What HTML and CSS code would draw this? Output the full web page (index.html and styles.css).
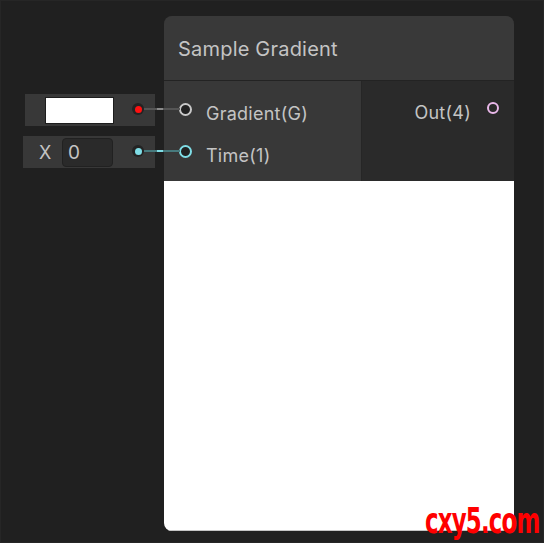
FILE: index.html
```html
<!DOCTYPE html>
<html lang="en">
<head>
    <meta charset="UTF-8">
    <title>Sample Gradient</title>
    <link rel="stylesheet" href="styles.css">
</head>
<body>
    <div class="graph">
        <!-- inline input widgets on the left of the node -->
        <div class="inline gradientInline">
            <span class="swatch"></span>
            <span class="dot red"></span>
        </div>
        <div class="inline timeInline">
            <span class="axis">X</span>
            <span class="numField">0</span>
            <span class="dot cyan"></span>
        </div>

        <svg class="edges" width="544" height="543">
            <line x1="144" y1="109" x2="180" y2="109" stroke="#555" stroke-width="2"/>
            <line x1="157" y1="109" x2="163" y2="109" stroke="#8a8a8a" stroke-width="2"/>
            <line x1="144" y1="151" x2="180" y2="151" stroke="#477a7d" stroke-width="2"/>
            <line x1="157" y1="151" x2="163" y2="151" stroke="#7fdde6" stroke-width="2"/>
        </svg>

        <div class="node">
            <div class="title">Sample Gradient</div>
            <div class="ports">
                <div class="inputs">
                    <div class="port">
                        <span class="ring"></span>
                        <span class="label">Gradient(G)</span>
                    </div>
                    <div class="port">
                        <span class="ring cyanRing"></span>
                        <span class="label">Time(1)</span>
                    </div>
                </div>
                <div class="outputs">
                    <div class="port out">
                        <span class="label">Out(4)</span>
                        <span class="ring pinkRing"></span>
                    </div>
                </div>
            </div>
            <div class="preview"></div>
        </div>

        <div class="mark">cxy5.com</div>
    </div>
</body>
</html>
```

FILE: styles.css
```css
*{
    margin: 0;
    padding: 0;
    box-sizing: border-box;
}
body{
    background: #202020;
    font-family: Inter, "Noto Sans", sans-serif;
    color: #c4c4c4;
}
.graph{
    position: relative;
    width: 544px;
    height: 543px;
    box-shadow: inset 0 0 0 1px #262626;
    overflow: hidden;
}
.node{
    position: absolute;
    left: 164px;
    top: 16px;
    width: 350px;
    height: 515px;
    border-radius: 8px;
    overflow: hidden;
    background: #2a2a2a;
    display: flex;
    flex-direction: column;
}
.node .title{
    height: 65px;
    padding: 1px 0 0 14px;
    background: #393939;
    border-bottom: 1px solid #232323;
    font-size: 20px;
    letter-spacing: 0.2px;
    line-height: 64px;
}
.node .ports{
    display: flex;
    height: 100px;
}
.node .inputs{
    width: 198px;
    background: #383838;
    padding-top: 7px;
    border-right: 1px solid #262626;
}
.node .outputs{
    flex: 1;
    background: #2a2a2a;
    padding-top: 6px;
}
.port{
    height: 42px;
    display: flex;
    align-items: center;
    font-size: 18px;
    letter-spacing: 0.25px;
}
.port .label{
    margin-top: 8px;
}
.port .ring{
    width: 13px;
    height: 13px;
    border-radius: 50%;
    border: 2px solid #c8c8c8;
    background: #222;
    margin-left: 15px;
    margin-right: 14px;
}
.port .cyanRing{
    border-color: #7fdde6;
}
.port.out{
    justify-content: flex-end;
    padding-right: 15px;
}
.port.out .ring{
    margin-left: 16px;
    margin-right: 0;
    width: 12px;
    height: 12px;
}
.port .pinkRing{
    border-color: #eab8ea;
    background: transparent;
}
.node .preview{
    flex: 1;
    background: #fff;
    border-bottom: 1px solid #c4c4c4;
}
.inline{
    position: absolute;
    height: 32px;
    background: #383838;
    display: flex;
    align-items: center;
}
.gradientInline{
    left: 25px;
    top: 94px;
    width: 130px;
    padding-left: 20px;
}
.timeInline{
    left: 23px;
    top: 136px;
    width: 132px;
    padding-left: 16px;
}
.swatch{
    width: 69px;
    height: 27px;
    background: #fff;
    border: 1px solid #1d1d1d;
}
.axis{
    font-size: 18px;
    width: 23px;
}
.numField{
    width: 51px;
    height: 29px;
    background: #2a2a2a;
    border: 1px solid #212121;
    border-radius: 4px;
    font-size: 19px;
    line-height: 27px;
    padding-left: 5px;
}
.dot{
    position: absolute;
    right: 11px;
    top: 9px;
    width: 12px;
    height: 12px;
    border-radius: 50%;
    background: #232323;
}
.dot::after{
    content: "";
    position: absolute;
    left: 2.5px;
    top: 2.5px;
    width: 7px;
    height: 7px;
    border-radius: 50%;
}
.dot.red::after{
    background: #ff1010;
}
.dot.cyan::after{
    background: #7fdde6;
}
.edges{
    position: absolute;
    left: 0;
    top: 0;
    z-index: 2;
    pointer-events: none;
}
.mark{
    position: absolute;
    right: 5px;
    bottom: 4px;
    color: #ff0000;
    font-family: "DejaVu Sans Condensed", "DejaVu Sans", sans-serif;
    font-weight: bold;
    font-size: 31px;
    line-height: 31px;
    letter-spacing: -1px;
    transform: scale(0.82, 1.12);
    transform-origin: right bottom;
    z-index: 3;
}
```
